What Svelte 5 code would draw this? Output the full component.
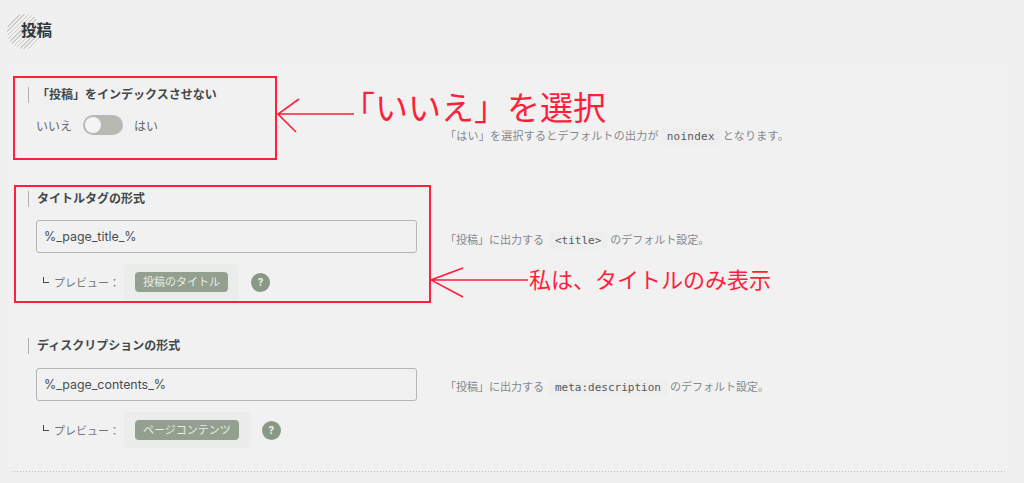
<script>
	const fields = [
		{
			title: 'タイトルタグの形式',
			value: '%_page_title_%',
			preview: '投稿のタイトル',
			pre: '「投稿」に出力する',
			code: '<title>',
			post: 'のデフォルト設定。',
			cls: 'row-title'
		},
		{
			title: 'ディスクリプションの形式',
			value: '%_page_contents_%',
			preview: 'ページコンテンツ',
			pre: '「投稿」に出力する',
			code: 'meta:description',
			post: 'のデフォルト設定。',
			cls: 'row-desc'
		}
	];
</script>

<div class="page">
	<header class="head">
		<span class="head-mark"></span>
		<h2>投稿</h2>
	</header>

	<section class="panel">
		<div class="row row-noindex">
			<div class="left">
				<h3>「投稿」をインデックスさせない</h3>
				<div class="switch-line">
					<span>いいえ</span>
					<span class="switch"><i></i></span>
					<span>はい</span>
				</div>
			</div>
			<p class="note">「はい」を選択するとデフォルトの出力が<code>noindex</code>となります。</p>
		</div>

		{#each fields as f}
			<div class="row {f.cls}">
				<div class="left">
					<h3>{f.title}</h3>
					<div class="input">{f.value}</div>
					<div class="preview">
						<span class="corner"></span>
						<span class="preview-label">プレビュー：</span>
						<span class="tag-wrap"><span class="tag">{f.preview}</span></span>
						<span class="help">?</span>
					</div>
				</div>
				<p class="note">{f.pre}<code>{f.code}</code>{f.post}</p>
			</div>
		{/each}
	</section>

	<div class="mark box-1"></div>
	<div class="mark box-2"></div>
	<svg class="arrows" width="1024" height="483" viewBox="0 0 1024 483" fill="none" stroke="#ff1e3c" stroke-width="1.6">
		<path d="M278 114H354M299 99L278 114L296 132" />
		<path d="M431 280H528M463 268L431 280L463 297" />
	</svg>
	<span class="callout callout-1">「いいえ」を選択</span>
	<span class="callout callout-2">私は、タイトルのみ表示</span>
</div>

<style>
	:global(body) { margin: 0; background: #f0f0f0; }

	.page {
		position: relative;
		width: 1024px;
		height: 483px;
		overflow: hidden;
		box-sizing: border-box;
		padding: 20px 14px 0 7px;
		font-family: Inter, "Noto Sans CJK JP", sans-serif;
		color: #3c4043;
	}

	.head { display: flex; align-items: center; height: 22px; padding-left: 14px; position: relative; }
	.head-mark {
		position: absolute;
		left: 0;
		top: -6px;
		width: 35px;
		height: 35px;
		border-radius: 50%;
		background: repeating-linear-gradient(135deg, #cbcdc9 0 1px, #f0f0f0 1px 3px);
	}
	.head h2 { position: relative; margin: 0; font-size: 15.5px; line-height: 22px; font-weight: 700; color: #30353a; }

	.panel {
		margin-top: 24px;
		height: 406px;
		box-sizing: border-box;
		padding: 21px 0 0 28px;
		background: #f1f1f1 linear-gradient(to right, #bdbdbd 1px, transparent 1px) left bottom / 3px 1px repeat-x;
		border-radius: 6px;
		border-left: 1px solid #eeeeee;
		border-right: 1px solid #eeeeee;
	}

	.row { display: grid; grid-template-columns: 381px 1fr; column-gap: 28px; align-items: start; }
	.row-noindex { height: 104px; }
	.row-title { height: 147px; }

	h3 {
		margin: 0 0 0 -8px;
		padding-left: 8px;
		border-left: 1px solid #a8b5a6;
		font-size: 12px;
		line-height: 16px;
		font-weight: 700;
		color: #43474a;
	}

	.switch-line { display: flex; align-items: center; gap: 11px; margin-top: 12px; font-size: 12px; color: #62666a; }
	.switch { width: 40px; height: 20px; border-radius: 10px; background: #b9b9b4; position: relative; }
	.switch i { position: absolute; left: 2px; top: 2px; width: 16px; height: 16px; border-radius: 50%; background: #f4f4f4; }

	.input {
		margin-top: 13px;
		height: 33px;
		box-sizing: border-box;
		padding-left: 7px;
		border: 1px solid #b5b5b5;
		border-radius: 3px;
		font-size: 12.4px;
		line-height: 31px;
		color: #4a4d50;
	}
	.row-desc .input { margin-top: 14px; }

	.preview { display: flex; align-items: center; margin-top: 11px; font-size: 11px; color: #72767a; }
	.corner {
		box-sizing: border-box;
		width: 6px;
		height: 6px;
		margin: -5px 5px 0 7px;
		border-left: 1px solid #43474a;
		border-bottom: 1px solid #43474a;
	}
	.preview-label { width: 70px; }
	.tag-wrap { padding: 8px 11px; background: #ebedeb; border-radius: 3px; }
	.tag { display: block; padding: 0 8px; background: #93a08f; color: #e9ece7; border-radius: 4px; line-height: 20px; font-size: 11px; white-space: nowrap; }
	.help {
		width: 19px;
		height: 19px;
		margin-left: 12px;
		border-radius: 50%;
		background: #8a9886;
		color: #eef0ec;
		font-size: 10px;
		font-weight: 700;
		line-height: 19px;
		text-align: center;
	}

	.note { margin: 41px 0 0; font-size: 11px; line-height: 16px; color: #85888b; white-space: nowrap; }
	.note code {
		font-family: "DejaVu Sans Mono", monospace;
		font-size: 11px;
		color: #55585b;
		padding: 2px 6px;
		margin: 0 3px 0 5px;
		background: #eeeeee;
		border-radius: 2px;
	}
	.row-noindex .note { letter-spacing: 0.25px; }
	.row-noindex .note code { margin: 0 2px; }

	.mark { position: absolute; box-sizing: border-box; border: 2px solid #ff1e3c; }
	.box-1 { left: 13px; top: 76px; width: 264px; height: 84px; }
	.box-2 { left: 14px; top: 185px; width: 417px; height: 118px; }

	.arrows { position: absolute; left: 0; top: 0; }

	.callout { position: absolute; color: #ff1e3c; font-weight: 400; white-space: nowrap; }
	.callout-1 { left: 342px; top: 86px; font-size: 33px; line-height: 44px; }
	.callout-2 { left: 529px; top: 265px; font-size: 22px; line-height: 30px; }
</style>
